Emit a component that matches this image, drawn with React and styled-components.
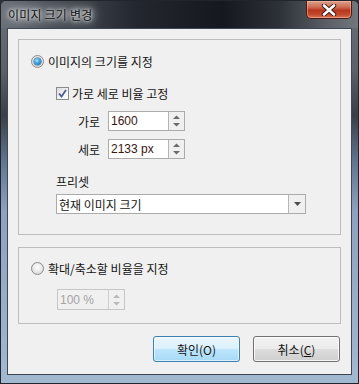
import React from 'react';
import styled, { createGlobalStyle } from 'styled-components';

const GlobalStyle = createGlobalStyle`
  html, body {
    margin: 0;
    padding: 0;
    background: #2e3238;
  }
  body {
    font-family: "Noto Sans CJK KR", "Liberation Sans", sans-serif;
    font-size: 12px;
    color: #141414;
  }
`;

const Window = styled.div`
  width: 359px;
  height: 384px;
  box-sizing: border-box;
  border: 1px solid #22262c;
  border-radius: 6px 6px 0 0;
  background: linear-gradient(180deg, #6a7078 0%, #5b6169 18%, #3a3f47 30%, #5f7590 42%, #8ba3c0 55%, #a3b8d1 100%);
  display: flex;
  flex-direction: column;
  padding: 0 6px 8px 6px;
  overflow: hidden;
`;

const TitleBar = styled.div`
  height: 27px;
  margin: 0 -6px;
  padding: 0 6px 0 7px;
  display: flex;
  align-items: flex-start;
  justify-content: space-between;
  background: linear-gradient(90deg, #6b7179 0%, #4b5159 14%, #23272f 38%, #15181e 62%, #2d3138 78%, #5d6269 92%, #72777e 100%);
`;

const Title = styled.span`
  margin-top: 5px;
  font-size: 12px;
  color: #111;
  letter-spacing: 0.2px;
  text-shadow: 0 0 6px #e4e6e8, 0 0 10px #d8dadd, 0 0 14px #c8cbcf, 0 0 3px #fff;
`;

const CloseButton = styled.div`
  width: 46px;
  height: 18px;
  box-sizing: border-box;
  border: 1px solid #4a1c14;
  border-top: none;
  border-radius: 0 0 5px 5px;
  box-shadow: inset 0 0 0 1px rgba(255, 200, 180, 0.45);
  background: linear-gradient(180deg, #dca08e 0%, #cf6f56 35%, #b8371c 55%, #c24a2c 80%, #d8765a 100%);
  display: flex;
  align-items: center;
  justify-content: center;
`;

const Client = styled.div`
  flex: 1;
  border: 1px solid #3f4752;
  background: #f0f0f0;
  padding: 10px 10px 0 10px;
  display: flex;
  flex-direction: column;
`;

const Group = styled.div`
  border: 1px solid #bdbdbd;
  padding: ${p => p.$pad};
  margin-top: ${p => p.$top || 0}px;
  display: flex;
  flex-direction: column;
  align-items: flex-start;
`;

const Row = styled.div`
  display: flex;
  align-items: center;
  height: ${p => p.$h || 16}px;
  margin-top: ${p => p.$top || 0}px;
  margin-left: ${p => p.$left || 0}px;
`;

const Radio = styled.span`
  width: 13px;
  height: 13px;
  box-sizing: border-box;
  border-radius: 50%;
  border: 1px solid #8a8b8c;
  background: radial-gradient(circle at 50% 40%, #ffffff 0%, #e6e6e6 55%, #c9c9c9 100%);
  display: flex;
  align-items: center;
  justify-content: center;
  margin-right: 4px;
  &::after {
    content: '';
    width: 7px;
    height: 7px;
    border-radius: 50%;
    display: ${p => (p.$on ? 'block' : 'none')};
    background: radial-gradient(circle at 40% 35%, #a9e2ff 0%, #3ba2e0 45%, #135a9a 100%);
    box-shadow: 0 0 0 0.5px #1d4f7c;
  }
`;

const Check = styled.span`
  width: 13px;
  height: 13px;
  box-sizing: border-box;
  border: 1px solid #8a8b8c;
  background: linear-gradient(135deg, #dcdcdc 0%, #f4f4f4 60%, #ffffff 100%);
  display: flex;
  align-items: center;
  justify-content: center;
  margin-right: 3px;
`;

const FieldLabel = styled.span`
  width: 44px;
  text-align: right;
  padding-right: 8px;
`;

const Spin = styled.div`
  display: flex;
  height: ${p => p.$h}px;
  box-sizing: border-box;
  border: 1px solid ${p => (p.$disabled ? '#c6c6c6' : '#ababab')};
  background: ${p => (p.$disabled ? '#f0f0f0' : '#fff')};
`;

const SpinText = styled.div`
  width: ${p => p.$w}px;
  padding-left: 2px;
  font-family: "Liberation Sans", "DejaVu Sans", sans-serif;
  font-size: 12px;
  display: flex;
  align-items: center;
  color: ${p => (p.$disabled ? '#a3a3a3' : '#3a1512')};
`;

const SpinArrows = styled.div`
  width: 15px;
  border-left: 1px solid ${p => (p.$disabled ? '#cdcdcd' : '#b5b5b5')};
  background: #f0f0f0;
  display: flex;
  align-items: center;
  justify-content: center;
`;

const Select = styled.div`
  width: 250px;
  height: 20px;
  box-sizing: border-box;
  border: 1px solid #ababab;
  background: #fff;
  display: flex;
  margin-top: ${p => p.$top}px;
  margin-left: 25px;
`;

const SelectText = styled.div`
  flex: 1;
  padding-left: 2px;
  display: flex;
  align-items: center;
`;

const SelectButton = styled.div`
  width: 16px;
  border-left: 1px solid #b5b5b5;
  background: #f0f0f0;
  display: flex;
  align-items: center;
  justify-content: center;
`;

const ButtonBar = styled.div`
  display: flex;
  justify-content: flex-end;
  gap: 13px;
  margin-top: 12px;
  padding-right: 1px;
`;

const Button = styled.div`
  width: 87px;
  height: 26px;
  box-sizing: border-box;
  border-radius: 3px;
  border: 1px solid ${p => (p.$primary ? '#3c7fb1' : '#707070')};
  box-shadow: inset 0 0 0 1px ${p => (p.$primary ? 'rgba(255,255,255,0.6)' : 'rgba(255,255,255,0.8)')};
  background: ${p =>
    p.$primary
      ? 'linear-gradient(180deg, #eaf6fd 0%, #d9f0fc 49%, #bee6fd 50%, #a7d9f5 100%)'
      : 'linear-gradient(180deg, #f2f2f2 0%, #ebebeb 49%, #dddddd 50%, #cfcfcf 100%)'};
  display: flex;
  align-items: center;
  justify-content: center;
  color: #141414;
  u { text-decoration: underline; text-underline-offset: 1px; }
`;

const Arrows = ({ disabled }) => (
  <svg width="9" height="14" viewBox="0 0 9 14">
    <path d="M1 5 L4.5 1.5 L8 5 Z" fill={disabled ? '#b9b9b9' : '#6a6a6a'} />
    <path d="M1 9 L4.5 12.5 L8 9 Z" fill={disabled ? '#b9b9b9' : '#6a6a6a'} />
  </svg>
);

const SpinBox = ({ value, width, height, disabled }) => (
  <Spin $h={height} $disabled={disabled}>
    <SpinText $w={width} $disabled={disabled}>{value}</SpinText>
    <SpinArrows $disabled={disabled}>
      <Arrows disabled={disabled} />
    </SpinArrows>
  </Spin>
);

export default function App() {
  return (
    <>
      <GlobalStyle />
      <Window>
        <TitleBar>
          <Title>이미지 크기 변경</Title>
          <CloseButton>
            <svg width="16" height="12" viewBox="0 0 16 12">
              <path d="M3 1.5 L13 10.5 M13 1.5 L3 10.5" stroke="#3a1a14" strokeWidth="4.4" strokeLinecap="round" />
              <path d="M3 1.5 L13 10.5 M13 1.5 L3 10.5" stroke="#ffffff" strokeWidth="2.6" strokeLinecap="round" />
            </svg>
          </CloseButton>
        </TitleBar>
        <Client>
          <Group $pad="13px 0 20px 12px">
            <Row>
              <Radio $on />
              <span>이미지의 크기를 지정</span>
            </Row>
            <Row $top={16} $left={25}>
              <Check>
                <svg width="9" height="9" viewBox="0 0 9 9">
                  <path d="M1 4.5 L3.5 7.5 L8 1" fill="none" stroke="#4a5d96" strokeWidth="1.8" />
                </svg>
              </Check>
              <span>가로 세로 비율 고정</span>
            </Row>
            <Row $top={10} $left={25} $h={20}>
              <FieldLabel>가로</FieldLabel>
              <SpinBox value="1600" width={57} height={20} />
            </Row>
            <Row $top={8} $left={25} $h={20}>
              <FieldLabel>세로</FieldLabel>
              <SpinBox value="2133 px" width={57} height={20} />
            </Row>
            <Row $top={14} $left={25}>
              <span>프리셋</span>
            </Row>
            <Select $top={5}>
              <SelectText>현재 이미지 크기</SelectText>
              <SelectButton>
                <svg width="7" height="4" viewBox="0 0 7 4">
                  <path d="M0 0 L7 0 L3.5 4 Z" fill="#4d4d4d" />
                </svg>
              </SelectButton>
            </Select>
          </Group>
          <Group $top={12} $pad="12px 0 13px 12px">
            <Row>
              <Radio />
              <span>확대/축소할 비율을 지정</span>
            </Row>
            <Row $top={13} $left={26} $h={21}>
              <SpinBox value="100 %" width={48} height={21} disabled />
            </Row>
          </Group>
          <ButtonBar>
            <Button $primary>확인(O)</Button>
            <Button>취소(<u>C</u>)</Button>
          </ButtonBar>
        </Client>
      </Window>
    </>
  );
}
